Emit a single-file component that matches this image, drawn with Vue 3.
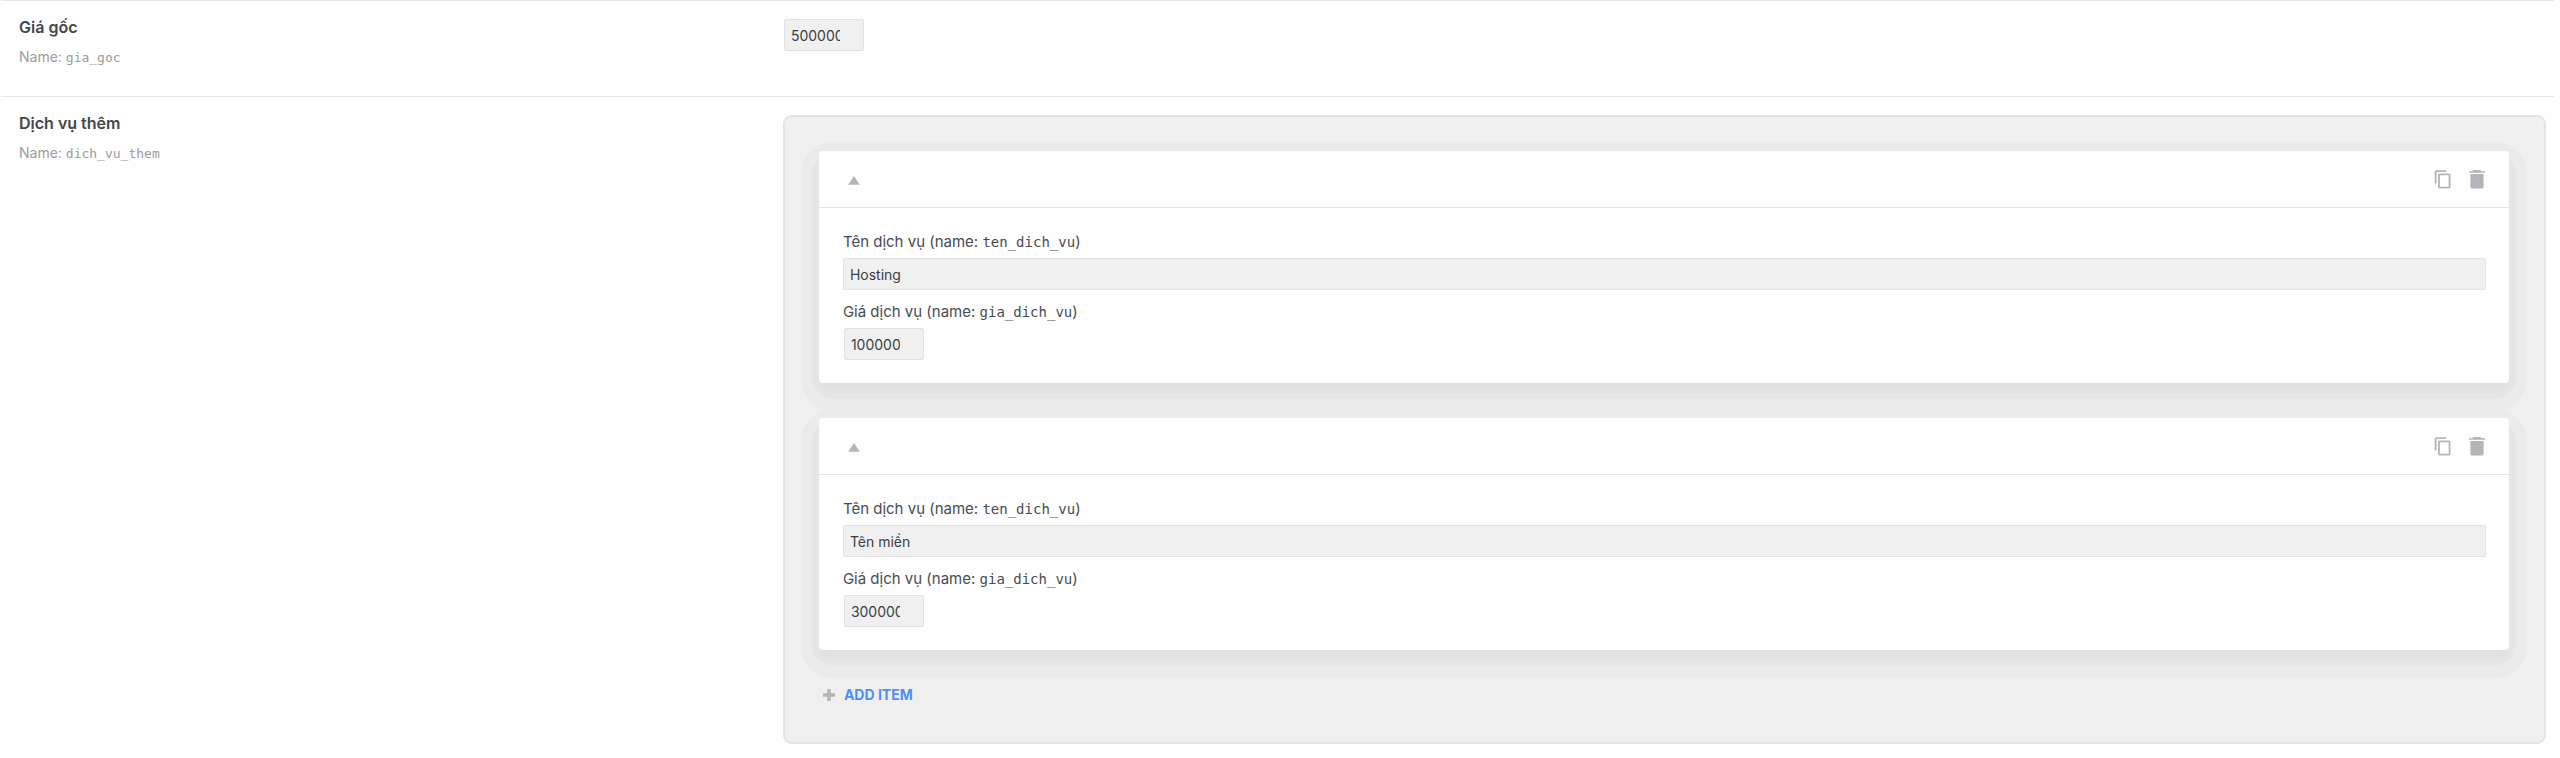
<script setup>
import { ref } from "vue";

const price = ref("500000");

const items = ref([
  { id: 1, name: "Hosting", price: "100000", open: true },
  { id: 2, name: "Tên miền", price: "300000", open: true }
]);

let nextId = 3;

//add empty item
const addItem = () => {
  items.value.push({ id: nextId++, name: "", price: "", open: true });
};

//copy item below itself
const copyItem = (index) => {
  items.value.splice(index + 1, 0, { ...items.value[index], id: nextId++ });
};

const removeItem = (index) => {
  items.value.splice(index, 1);
};
</script>

<template>
  <main class="fields">
    <section class="row">
      <div class="info">
        <label class="title" for="gia_goc">Giá gốc</label>
        <p class="name">Name: <code>gia_goc</code></p>
      </div>
      <div class="control">
        <input id="gia_goc" v-model="price" class="input number" type="text" inputmode="numeric" />
      </div>
    </section>

    <section class="row">
      <div class="info">
        <h2 class="title">Dịch vụ thêm</h2>
        <p class="name">Name: <code>dich_vu_them</code></p>
      </div>
      <div class="control">
        <div class="repeater">
          <article v-for="(item, index) in items" :key="item.id" class="item">
            <header class="item-header">
              <button class="icon-button" type="button" aria-label="Toggle" @click="item.open = !item.open">
                <svg width="20" height="20" viewBox="0 0 20 20"><path d="M10 7 15.8 15.8H4.2z" /></svg>
              </button>
              <div class="actions">
                <button class="icon-button" type="button" aria-label="Copy" @click="copyItem(index)">
                  <svg width="20" height="20" viewBox="0 0 24 24">
                    <path d="M16 1.4H4c-1.1 0-2 .9-2 2v14h2.2V3.6H16V1.4zm3 4H8c-1.1 0-2 .9-2 2v14c0 1.1.9 2 2 2h11c1.1 0 2-.9 2-2v-14c0-1.1-.9-2-2-2zm-.2 15.8H8.2V7.6h10.6v13.6z" />
                  </svg>
                </button>
                <button class="icon-button" type="button" aria-label="Remove" @click="removeItem(index)">
                  <svg width="20" height="20" viewBox="0 0 20 20">
                    <path d="M6.5 1h7l1 1.2H18v1.6H2V2.2h3.5zM3.4 5h13.2v12.7c0 1.1-.8 1.9-1.9 1.9H5.3c-1.1 0-1.9-.8-1.9-1.9z" />
                  </svg>
                </button>
              </div>
            </header>
            <div v-if="item.open" class="item-body">
              <label :for="'name-' + item.id">Tên dịch vụ (name: <code>ten_dich_vu</code>)</label>
              <input :id="'name-' + item.id" v-model="item.name" class="input" type="text" />
              <label :for="'price-' + item.id">Giá dịch vụ (name: <code>gia_dich_vu</code>)</label>
              <input :id="'price-' + item.id" v-model="item.price" class="input number" type="text" inputmode="numeric" />
            </div>
          </article>
          <button class="add" type="button" @click="addItem">
            <svg width="12" height="12" viewBox="0 0 12 12"><path d="M4.2 0h3.6v4.2H12v3.6H7.8V12H4.2V7.8H0V4.2h4.2z" /></svg>
            ADD ITEM
          </button>
        </div>
      </div>
    </section>
  </main>
</template>

<style>
body {
  background: #fefefe;
}
</style>

<style scoped>
.fields {
  padding: 0 6px 12px 1px;
  color: #494c52;
  font-family: Inter, "Liberation Sans", sans-serif;
  font-size: 15px;
  line-height: 20px;
}

.row {
  display: grid;
  grid-template-columns: 30% minmax(0, 1fr);
  border-top: 1px solid #e6e6e6;
}

.info {
  padding: 16px 18px 29px;
}

.title {
  display: block;
  margin: 0 0 10px;
  color: #43464c;
  font-size: 16px;
  font-weight: 600;
  line-height: 20px;
}

.name {
  margin: 0;
  color: #9c9c9c;
  font-size: 14px;
}

code {
  font-family: "DejaVu Sans Mono", "Liberation Mono", monospace;
  font-size: 14px;
  line-height: 0;
}

.name code {
  font-size: 13px;
}

.control {
  padding: 18px 8px 0 16px;
}

.input {
  display: block;
  box-sizing: border-box;
  width: 100%;
  height: 32px;
  margin: 0;
  padding: 0 6px;
  border: 1px solid #e2e2e2;
  border-radius: 2px;
  background: #f0f0f0;
  color: #3c3f45;
  font: 400 14px/20px Inter, "Liberation Sans", sans-serif;
}

.number {
  width: 80px;
  margin-left: 1px;
  padding-right: 23px;
}

.repeater {
  position: relative;
  z-index: 0;
  display: flex;
  flex-direction: column;
  gap: 35px;
  padding: 34px 35px 37px 34px;
  border: 2px solid #e4e4e4;
  border-radius: 9px;
  background: #f0f0f0;
}

.item {
  position: relative;
  border-radius: 4px;
  background: #fefefe;
  box-shadow: 0 10px 6px -3px #dfdfdf;
}

/* stepped shadow around the card */
.item::before,
.item::after {
  content: "";
  position: absolute;
  z-index: -1;
}

.item::before {
  inset: -9px -18px -28px;
  border-radius: 32px;
  background: #ebebeb;
}

.item::after {
  inset: 2px -7px -16px;
  border-radius: 22px;
  background: #e6e6e6;
}

.item-header {
  display: flex;
  align-items: center;
  justify-content: space-between;
  height: 56px;
  padding: 0 22px 0 25px;
  border-bottom: 1px solid #e4e4e4;
}

.actions {
  display: flex;
  gap: 14px;
}

.icon-button {
  padding: 0;
  border: 0;
  background: none;
  cursor: pointer;
}

svg {
  display: block;
  fill: #b4b5b8;
}

.item-body {
  padding: 24px 23px 23px 24px;
}

.item-body label {
  display: block;
  margin-bottom: 6px;
}

.item-body .input + label {
  margin-top: 12px;
}

.add {
  display: flex;
  align-items: center;
  align-self: flex-start;
  gap: 9px;
  height: 20px;
  margin-left: 4px;
  padding: 0;
  border: 0;
  background: none;
  color: #4e8ff7;
  font: 700 14px/20px Inter, "Liberation Sans", sans-serif;
  cursor: pointer;
}
</style>
